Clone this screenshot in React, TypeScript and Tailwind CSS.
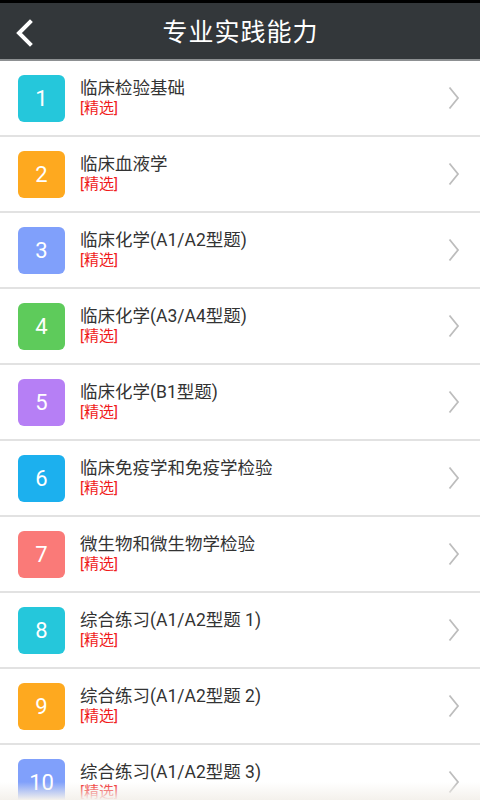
import React from 'react';

const items = [
  { n: 1, title: '临床检验基础', color: 'bg-[#25c7db]' },
  { n: 2, title: '临床血液学', color: 'bg-[#fea91f]' },
  { n: 3, title: '临床化学(A1/A2型题)', color: 'bg-[#80a0fb]' },
  { n: 4, title: '临床化学(A3/A4型题)', color: 'bg-[#5ecb5b]' },
  { n: 5, title: '临床化学(B1型题)', color: 'bg-[#b67ff5]' },
  { n: 6, title: '临床免疫学和免疫学检验', color: 'bg-[#1cb0ee]' },
  { n: 7, title: '微生物和微生物学检验', color: 'bg-[#fa7a78]' },
  { n: 8, title: '综合练习(A1/A2型题 1)', color: 'bg-[#25c7db]' },
  { n: 9, title: '综合练习(A1/A2型题 2)', color: 'bg-[#fea91f]' },
  { n: 10, title: '综合练习(A1/A2型题 3)', color: 'bg-[#80a0fb]' },
];

const font = { fontFamily: '"Roboto", "Noto Sans CJK SC", sans-serif' };

export default function App() {
  return (
    <div className="relative w-[480px] h-[800px] overflow-hidden bg-white" style={font}>
      <div className="h-[3px] bg-black" />
      {/* Header */}
      <div className="relative h-[58px] bg-[#33373a] flex items-center justify-center border-b-2 border-[#8d9092]">
        <button className="absolute left-[11px] top-[15px] w-[26px] h-[30px] flex items-center justify-center">
          <svg width="20" height="28" viewBox="0 0 20 28" fill="none">
            <path d="M16 3 L5 14 L16 25" stroke="white" strokeWidth="4" strokeLinecap="square" />
          </svg>
        </button>
        <h1 className="text-white text-[25px] tracking-[1px] pl-[1px] pt-[4px]">专业实践能力</h1>
      </div>

      {/* List */}
      <div className="flex flex-col">
        {items.map((it) => (
          <div key={it.n} className="h-[76px] flex items-center border-b-2 border-[#e2e2e2] pl-[18px] pr-[20px]">
            <div className={`w-[47px] h-[47px] rounded-[6px] ${it.color} flex items-center justify-center text-white text-[22px]`}>
              {it.n}
            </div>
            <div className="flex-1 pl-[15px] flex flex-col leading-none">
              <span className="text-[#333333] text-[17.5px] mb-[4px]">{it.title}</span>
              <span className="text-[#f01b1b] text-[15px]">[精选]</span>
            </div>
            <svg width="12" height="24" viewBox="0 0 12 24" fill="none">
              <path d="M1.5 1.5 L10 12 L1.5 22.5" stroke="#bdbdbd" strokeWidth="1.8" />
            </svg>
          </div>
        ))}
      </div>

      {/* bottom fade */}
      <div className="absolute left-0 right-0 bottom-0 h-[18px] bg-gradient-to-t from-[#f4f1ec] to-transparent" />
    </div>
  );
}
